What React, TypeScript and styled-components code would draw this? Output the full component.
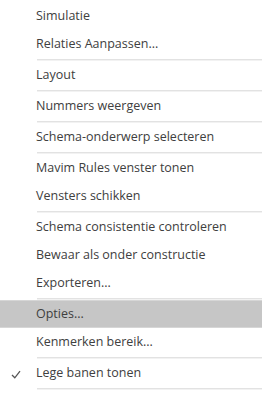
import React from 'react'
import styled, { createGlobalStyle } from 'styled-components';

const GlobalStyle = createGlobalStyle`
  html, body {
    margin: 0;
    padding: 0;
    background: #ffffff;
  }
  body {
    width: 262px;
    height: 393px;
    overflow: hidden;
    font-family: "Open Sans", "Noto Sans", "Liberation Sans", sans-serif;
  }
`;

type Entry =
  | { kind: 'item'; label: string; checked?: boolean; active?: boolean }
  | { kind: 'sep' };

const entries: Entry[] = [
  { kind: 'item', label: 'Simulatie' },
  { kind: 'item', label: 'Relaties Aanpassen...' },
  { kind: 'sep' },
  { kind: 'item', label: 'Layout' },
  { kind: 'sep' },
  { kind: 'item', label: 'Nummers weergeven' },
  { kind: 'sep' },
  { kind: 'item', label: 'Schema-onderwerp selecteren' },
  { kind: 'sep' },
  { kind: 'item', label: 'Mavim Rules venster tonen' },
  { kind: 'item', label: 'Vensters schikken' },
  { kind: 'sep' },
  { kind: 'item', label: 'Schema consistentie controleren' },
  { kind: 'item', label: 'Bewaar als onder constructie' },
  { kind: 'item', label: 'Exporteren...' },
  { kind: 'sep' },
  { kind: 'item', label: 'Opties...', active: true },
  { kind: 'item', label: 'Kenmerken bereik...' },
  { kind: 'sep' },
  { kind: 'item', label: 'Lege banen tonen', checked: true },
  { kind: 'sep' },
];

const CheckIcon = () => (
  <svg width="10" height="9" viewBox="0 0 10 9">
    <path d="M1 5 L3.8 7.8 L9 1.2" fill="none" stroke="#555" strokeWidth="1.3" />
  </svg>
);

const App = () => {
  return (
    <>
      <GlobalStyle />
      <Menu>
        {entries.map((entry, i) =>
          entry.kind === 'sep' ? (
            <Separator key={i} />
          ) : (
            <MenuItem key={i} $active={entry.active}>
              <CheckSlot>{entry.checked && <CheckIcon />}</CheckSlot>
              <Label>{entry.label}</Label>
            </MenuItem>
          )
        )}
      </Menu>
    </>
  )
}

const Menu = styled.div`
  display: flex;
  flex-direction: column;
  padding-top: 2px;
  width: 262px;
`;

const MenuItem = styled.div<{ $active?: boolean }>`
  height: 28px;
  box-sizing: border-box;
  display: flex;
  align-items: center;
  background-color: ${p => (p.$active ? '#c6c6c6' : 'transparent')};
  border-top: 1px solid ${p => (p.$active ? '#d6d6d6' : 'transparent')};
  border-bottom: 1px solid ${p => (p.$active ? '#d6d6d6' : 'transparent')};
`;

const CheckSlot = styled.span`
  width: 36px;
  display: flex;
  justify-content: center;
  padding-right: 4px;
  box-sizing: border-box;
  padding-top: 2px;
`;

const Label = styled.span`
  font-size: 12.5px;
  color: #404040;
  line-height: 1;
`;

const Separator = styled.div`
  height: 3px;
  margin-left: 37px;
  display: flex;
  flex-direction: column;
  justify-content: center;

  &::before {
    content: '';
    height: 2px;
    background: linear-gradient(#e2e2e2 50%, #f2f2f2 50%);
  }
`;

export default App;
